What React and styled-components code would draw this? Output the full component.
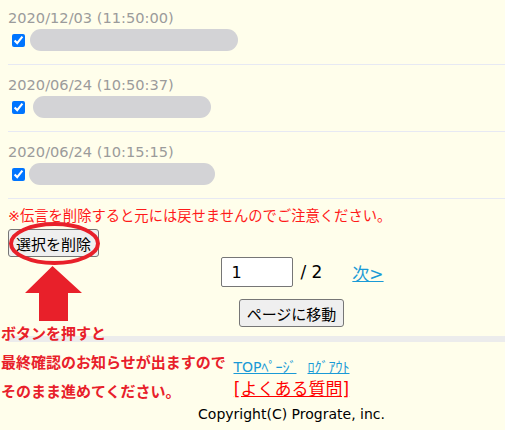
import React from 'react'
import styled, { createGlobalStyle } from 'styled-components'

const GlobalStyle = createGlobalStyle`
  html, body {
    margin: 0;
    background: #fffeeb;
    overflow: hidden;
  }
  body {
    font-family: "DejaVu Sans", "Noto Sans CJK JP", sans-serif;
    color: #000;
  }
`

const Page = styled.div`
  position: relative;
  width: 567px;
  margin-top: -2px;
  padding-left: 8px;
`

const Row = styled.div`
  padding: 11px 0 13px;
  border-bottom: 1px solid #e7e9f3;
`

const DateLine = styled.div`
  font-size: 14.6px;
  line-height: 18px;
  color: #9b9b9b;
`

const Body = styled.div`
  display: flex;
  align-items: center;
  margin-top: 2px;
  height: 22px;
`

const Check = styled.input`
  margin: 0 3px 0 4px;
  width: 13px;
  height: 13px;
`

const Redacted = styled.span`
  display: block;
  height: 22px;
  width: ${p => p.$w}px;
  margin-left: ${p => p.$shift}px;
  border-radius: 11px;
  background: #d3d3d6;
`

const Warning = styled.p`
  margin: 7px 0 3px;
  font-size: 14.3px;
  line-height: 20px;
  color: #ff1a1a;
  white-space: nowrap;
`

const PlainButton = styled.button`
  height: 28px;
  padding: 0 ${p => p.$pad}px;
  font-family: "DejaVu Sans", "Noto Sans CJK JP", sans-serif;
  font-size: ${p => p.$size}px;
  color: #000;
  background: #efefef;
  border: 1px solid #767676;
  border-radius: 3px;
`

const Pager = styled.div`
  display: flex;
  justify-content: center;
  align-items: center;
  height: 30px;
  padding-left: 22px;
  font-size: 17px;
`

const PageInput = styled.input`
  box-sizing: border-box;
  width: 72px;
  height: 30px;
  padding: 0 9px;
  font-family: "DejaVu Sans", sans-serif;
  font-size: 16px;
  background: #fff;
  border: 1px solid #767676;
  border-radius: 2px;
`

const Total = styled.span`
  margin-left: 7px;
`

const NextLink = styled.a`
  margin-left: 30px;
  color: #1a9ad6;
  text-decoration: underline;
`

const Center = styled.div`
  display: flex;
  justify-content: center;
  margin-top: 12px;
`

const Divider = styled.div`
  height: 6px;
  margin-top: 9px;
  background: #ececec;
`

const Footer = styled.div`
  display: flex;
  flex-direction: column;
  align-items: center;
  padding-top: 15px;
`

const FootLinks = styled.div`
  display: flex;
  gap: 11px;
  line-height: 20px;
`

const FootLink = styled.a`
  color: ${p => p.$color};
  text-decoration: underline;
  font-size: ${p => p.$size || 13}px;
  line-height: ${p => p.$lh || 20}px;
`

const Copy = styled.div`
  font-size: 14px;
  line-height: 20px;
  margin-top: 3px;
`

const Marks = styled.svg`
  position: absolute;
  left: 0;
  top: 222px;
  pointer-events: none;
`

const Note = styled.div`
  position: absolute;
  left: 1px;
  top: 320px;
  font-family: "Noto Sans CJK JP", sans-serif;
  font-weight: 700;
  font-size: 15px;
  line-height: 29px;
  color: #e8202a;
  white-space: nowrap;
`

const posts = [
  { date: '2020/12/03 (11:50:00)', w: 208, shift: 2 },
  { date: '2020/06/24 (10:50:37)', w: 178, shift: 5 },
  { date: '2020/06/24 (10:15:15)', w: 186, shift: 1 }
]

const App = () => {
  return (
    <>
      <GlobalStyle />
      <Page>
        {posts.map(post => (
          <Row key={post.date}>
            <DateLine>{post.date}</DateLine>
            <Body>
              <Check type="checkbox" defaultChecked />
              <Redacted $w={post.w} $shift={post.shift} />
            </Body>
          </Row>
        ))}

        <Warning>※伝言を削除すると元には戻せませんのでご注意ください。</Warning>
        <PlainButton $size={15} $pad={7}>選択を削除</PlainButton>

        <Pager>
          <PageInput defaultValue="1" />
          <Total>/ 2</Total>
          <NextLink href="#">次&gt;</NextLink>
        </Pager>
        <Center>
          <PlainButton $size={15} $pad={7}>ページに移動</PlainButton>
        </Center>

        <Divider />

        <Footer>
          <FootLinks>
            <FootLink href="#" $color="#1a9ad6" $size={14}>TOPﾍﾟｰｼﾞ</FootLink>
            <FootLink href="#" $color="#1a9ad6" $size={14}>ﾛｸﾞｱｳﾄ</FootLink>
          </FootLinks>
          <FootLink href="#" $color="#ff0000" $size={17} $lh={24}>[よくある質問]</FootLink>
          <Copy>Copyright(C) Prograte, inc.</Copy>
        </Footer>

        <Marks width="110" height="110" viewBox="0 222 110 110">
          <ellipse cx="54.5" cy="245.5" rx="43.5" ry="19.5" fill="none" stroke="#e8202a" strokeWidth="4" />
          <polygon points="52.5,268 82,295 68,295 68,323 39,323 39,295 25,295" fill="#e8202a" />
        </Marks>
        <Note>
          ボタンを押すと
          <br />
          最終確認のお知らせが出ますので
          <br />
          そのまま進めてください。
        </Note>
      </Page>
    </>
  )
}

export default App
